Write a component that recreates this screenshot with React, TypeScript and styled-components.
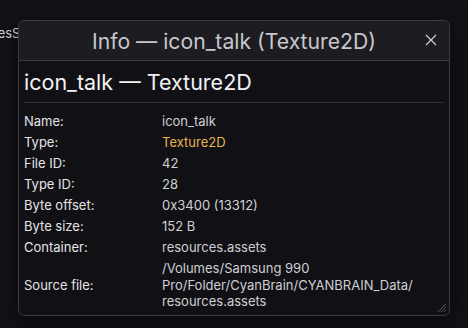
import React, { FC } from "react";
import styled, { createGlobalStyle } from "styled-components";

const GlobalStyle = createGlobalStyle`
  html, body {
    margin: 0;
    padding: 0;
    background: #121217;
    font-family: Inter, "Noto Sans", sans-serif;
    color: #e6e6ea;
  }
`;

const Page = styled.div`
  position: relative;
  width: 468px;
  height: 328px;
  overflow: hidden;
  background: #121217;
`;

const BackText = styled.div`
  padding-top: 25px;
  margin-left: -7px;
  font-size: 13px;
  color: #d8d8dc;
`;

const Dialog = styled.div`
  position: absolute;
  left: 18px;
  top: 20px;
  width: 432px;
  height: 296px;
  box-sizing: border-box;
  border: 1px solid #3a3a40;
  border-radius: 6px;
  background: #111115;
  box-shadow: 0 6px 24px rgba(0, 0, 0, 0.55);
  display: flex;
  flex-direction: column;
  overflow: hidden;
`;

const TitleBar = styled.div`
  position: relative;
  height: 40px;
  flex: 0 0 auto;
  box-sizing: border-box;
  border-bottom: 1px solid #3a3a40;
  background: #1c1c21;
  display: flex;
  align-items: center;
  justify-content: center;
`;

const Title = styled.div`
  font-size: 21.2px;
  color: #c8c8cc;
`;

const CloseButton = styled.button`
  position: absolute;
  right: 11px;
  top: 12px;
  width: 14px;
  height: 14px;
  padding: 0;
  border: none;
  background: transparent;
  display: flex;
  align-items: center;
  justify-content: center;
`;

const Body = styled.div`
  padding: 6px 5px 0 5px;
`;

const Heading = styled.h1`
  margin: 0;
  padding: 2px 0 7px;
  font-size: 21.5px;
  font-weight: 400;
  color: #f2f2f4;
  border-bottom: 1px solid #2e2e34;
`;

const InfoGrid = styled.div`
  display: grid;
  grid-template-columns: 138px 1fr;
  padding-top: 8px;
  font-size: 13px;
  line-height: 16.5px;
`;

const Label = styled.div`
  padding: 2.25px 0;
  color: #e4e4e8;
  display: flex;
  align-items: center;
`;

const Value = styled.div<{ $accent?: boolean }>`
  padding: 2.25px 0;
  color: ${(p) => (p.$accent ? "#e8b54a" : "#cfcfd4")};
`;

const Grip = styled.svg`
  position: absolute;
  right: 2px;
  bottom: 2px;
`;

const rows: { label: string; value: React.ReactNode; accent?: boolean }[] = [
  { label: "Name:", value: "icon_talk" },
  { label: "Type:", value: "Texture2D", accent: true },
  { label: "File ID:", value: "42" },
  { label: "Type ID:", value: "28" },
  { label: "Byte offset:", value: "0x3400 (13312)" },
  { label: "Byte size:", value: "152 B" },
  { label: "Container:", value: "resources.assets" },
  {
    label: "Source file:",
    value: (
      <>
        /Volumes/Samsung 990
        <br />
        Pro/Folder/CyanBrain/CYANBRAIN_Data/
        <br />
        resources.assets
      </>
    ),
  },
];

const App: FC = () => {
  return (
    <Page>
      <GlobalStyle />
      <BackText>resS</BackText>
      <Dialog>
        <TitleBar>
          <Title>Info — icon_talk (Texture2D)</Title>
          <CloseButton aria-label="Close">
            <svg width="12" height="12" viewBox="0 0 12 12">
              <path d="M1 1L11 11M11 1L1 11" stroke="#d0d0d4" strokeWidth="1.2" />
            </svg>
          </CloseButton>
        </TitleBar>
        <Body>
          <Heading>icon_talk — Texture2D</Heading>
          <InfoGrid>
            {rows.map((r) => (
              <React.Fragment key={r.label}>
                <Label>{r.label}</Label>
                <Value $accent={r.accent}>{r.value}</Value>
              </React.Fragment>
            ))}
          </InfoGrid>
        </Body>
        <Grip width="12" height="12" viewBox="0 0 12 12">
          <path d="M11 3L3 11M11 6L6 11M11 9L9 11" stroke="#55555b" strokeWidth="1" />
        </Grip>
      </Dialog>
    </Page>
  );
};

export default App;
